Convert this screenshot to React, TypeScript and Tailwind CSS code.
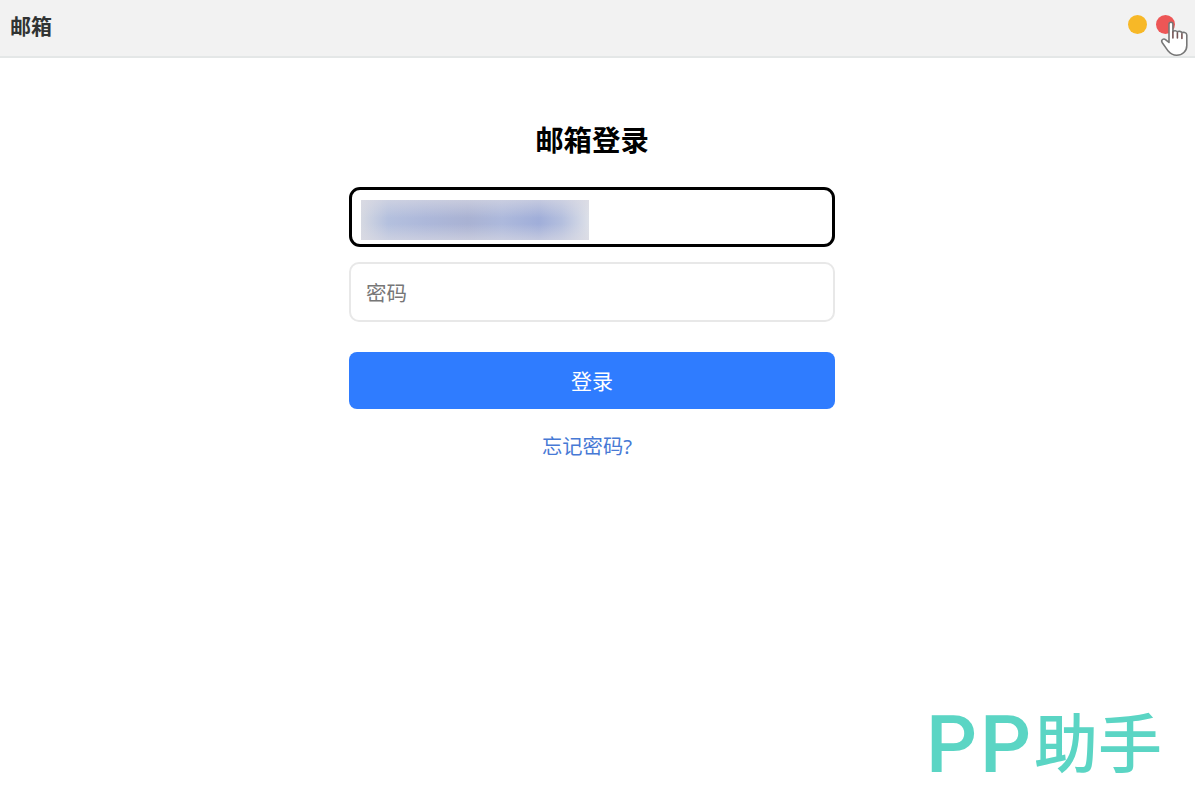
import { useState } from "react"

function TitleBar() {
  return (
    <header className="flex h-[58px] items-center justify-between border-b-2 border-[#e4e7e7] bg-[#f2f2f2] pl-[10px] pr-5">
      <span className="-mt-1 text-[21px] font-bold leading-none text-[#303333]">邮箱</span>
      <div className="relative -mt-[7px] flex gap-[9px]">
        <span className="size-[19px] rounded-full bg-[#f7b827]"></span>
        <span className="size-[19px] rounded-full bg-[#ed5656]"></span>
        <HandCursor />
      </div>
    </header>
  )
}

// Pointer resting on the close button
function HandCursor() {
  return (
    <svg
      className="absolute left-[32px] top-[6px]"
      width="28"
      height="36"
      viewBox="0 0 28 36"
      fill="white"
      stroke="#777777"
      strokeWidth="1.6"
      strokeLinejoin="round"
      strokeLinecap="round"
    >
      <path d="M9 21.5V3.2c0-2.7 3.9-2.7 3.9 0v7.6c.5-1.6 4.2-1.4 4.5.4.7-1.4 4.2-1.2 4.5.9.8-1.2 4.9-.8 4.9 1.9v10.4c0 5.8-4.4 9.9-10.2 9.9-4.2 0-6.2-1.6-8.4-4.2L2.3 21.8c-1.8-2.8 1.2-5 3.5-3z" />
      <path d="M12.9 11v6M17.4 12v5M21.9 13v4.4" stroke="#765555" />
    </svg>
  )
}

export default function App() {
  const [password, setPassword] = useState("")

  return (
    <div className="relative h-[795px] overflow-hidden bg-white font-['Noto_Sans','Noto_Sans_CJK_SC',sans-serif]">
      <TitleBar />

      <main className="ml-[349px] flex w-[486px] flex-col pt-[61px]">
        <h1 className="text-center text-[28.4px] font-bold leading-[42px] text-black">邮箱登录</h1>

        {/* Account field, value is masked */}
        <div className="mt-[26px] flex h-[60px] items-center rounded-[11px] border-3 border-black pl-[9px]">
          <div className="mt-[5px] h-10 w-[228px] bg-[linear-gradient(90deg,#d6d9e2_0%,#b4c0de_12%,#adb8da_28%,#a9b2d3_47%,#adb9dc_62%,#a0aed9_78%,#b4bfde_88%,#dde0e8_100%)]">
            <div className="h-full w-full bg-[linear-gradient(180deg,#dcdbe399_0%,#dcdbe300_45%,#dcdbe300_60%,#dcdbe399_100%)]"></div>
          </div>
        </div>

        <input
          type="password"
          placeholder="密码"
          value={password}
          onChange={(e) => setPassword(e.target.value)}
          className="mt-[15px] h-[60px] rounded-[10px] border-2 border-[#e8e8e8] px-[15px] pt-[2px] text-[20.5px] outline-none placeholder:text-[#777777]"
        />

        <button className="mt-[30px] h-[57px] rounded-[8px] bg-[#2f7cff] pt-px text-[21px] leading-none text-white">
          登录
        </button>

        <a href="#" className="mt-[22px] self-center pr-[10px] text-[20.3px] leading-[30px] text-[#4779d5]">
          忘记密码?
        </a>
      </main>

      {/* Watermark */}
      <div className="absolute left-[926px] top-[700px] flex h-[86px] items-center text-[#5bd5c4]">
        <span className="pt-[4px] font-[Roboto,sans-serif] text-[80px] font-medium leading-none tracking-[3px]">PP</span>
        <span className="text-[64px] font-medium leading-none">助手</span>
      </div>
    </div>
  )
}
